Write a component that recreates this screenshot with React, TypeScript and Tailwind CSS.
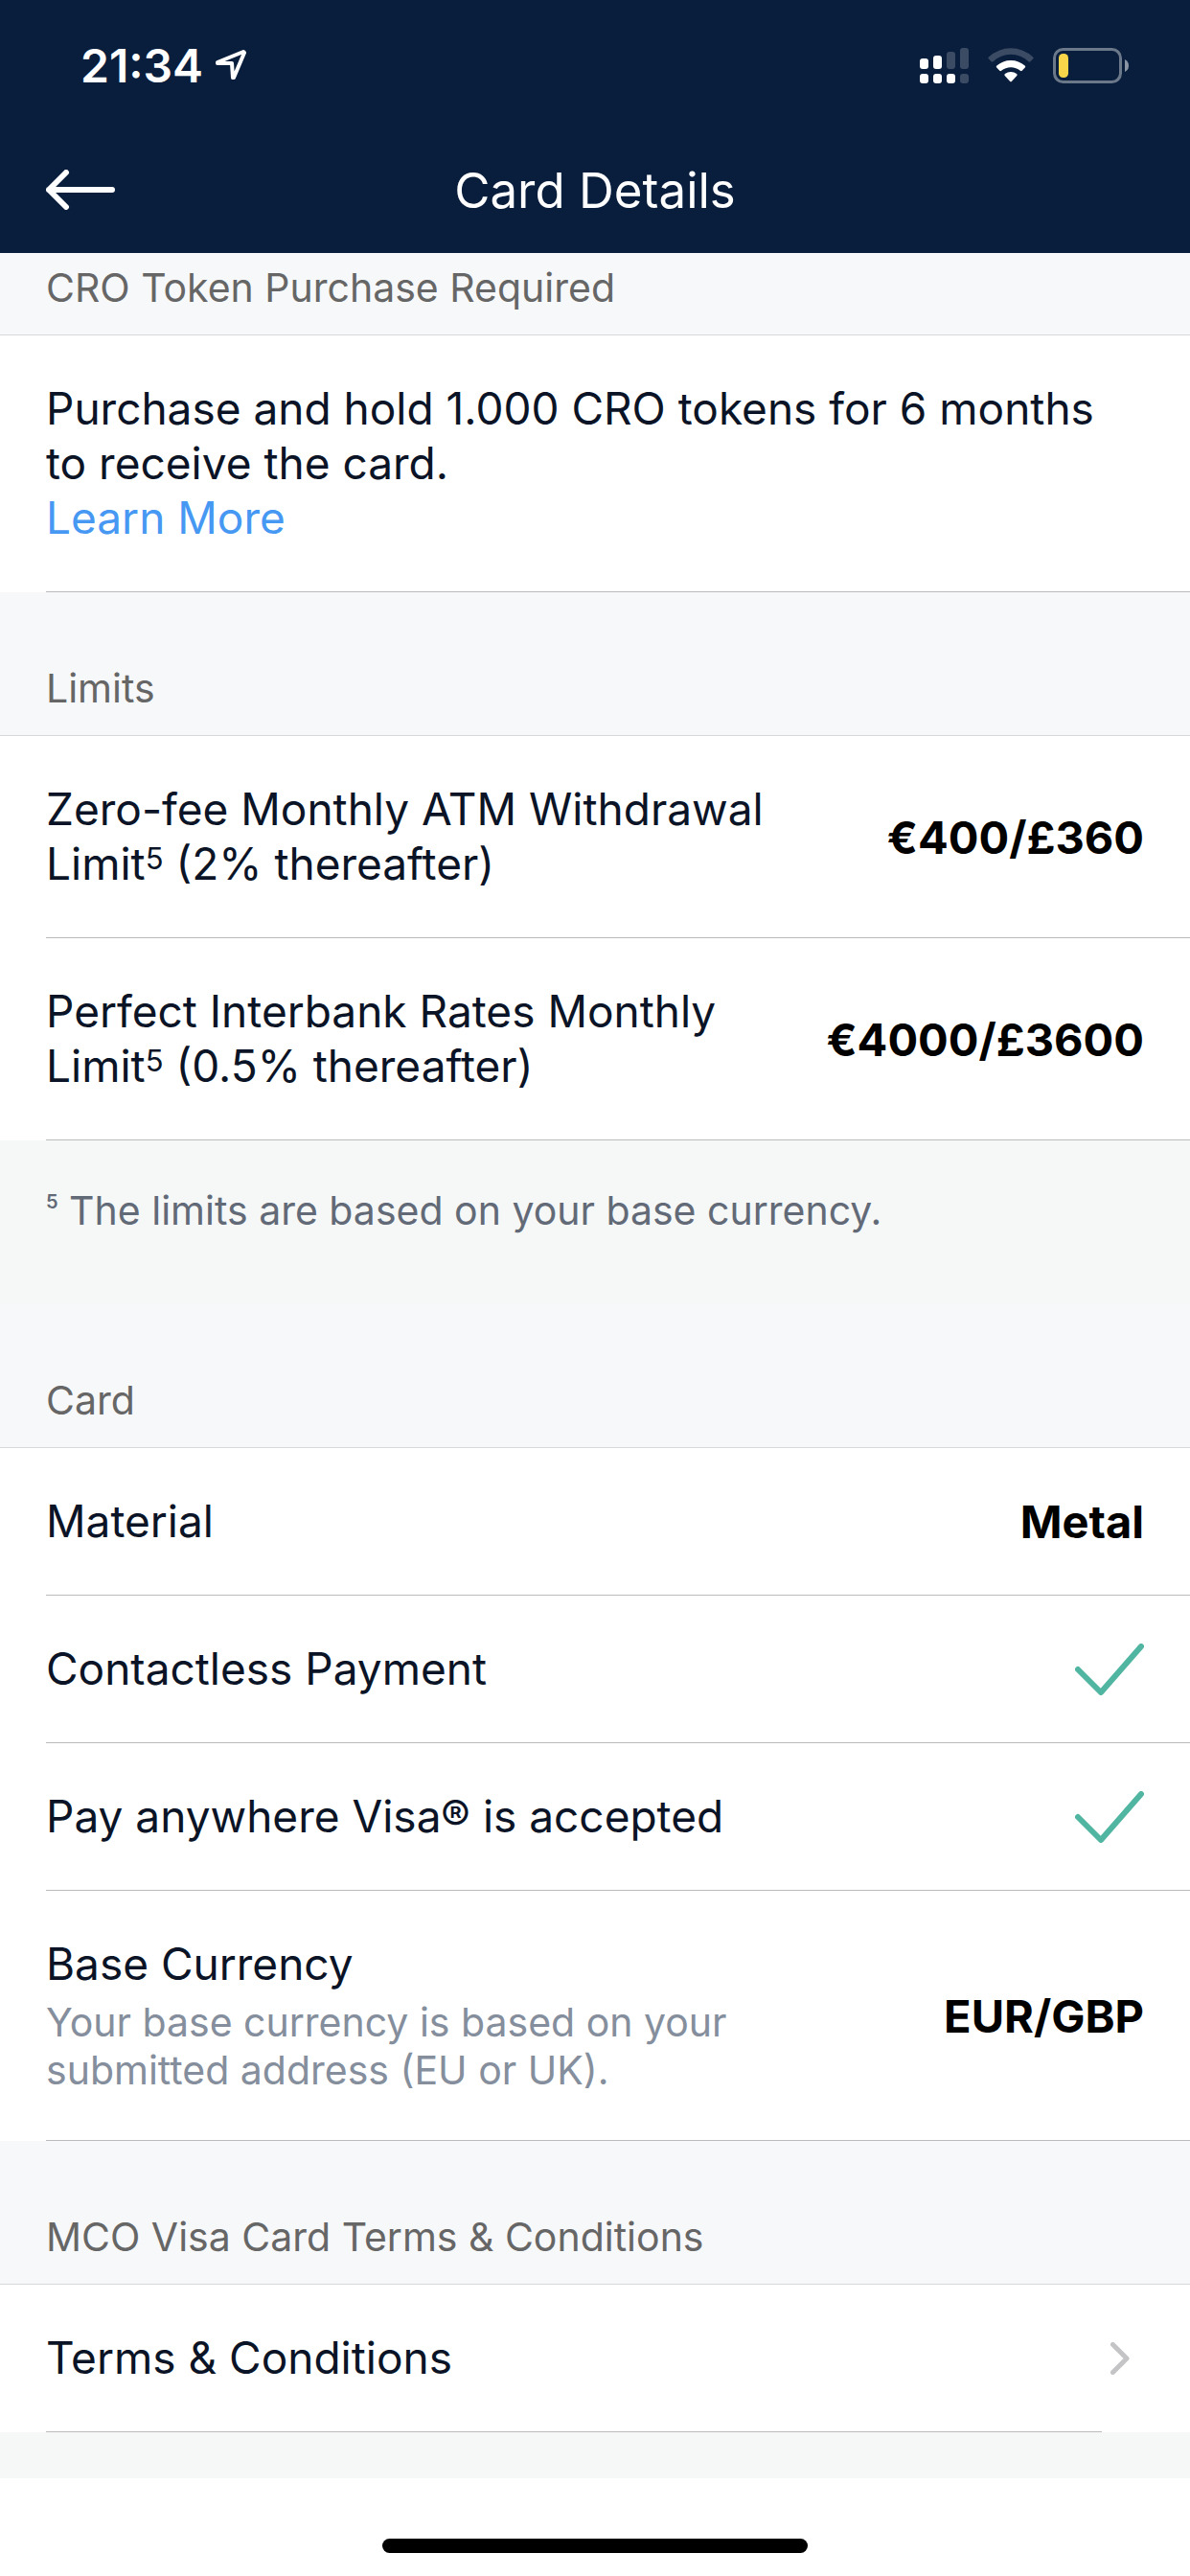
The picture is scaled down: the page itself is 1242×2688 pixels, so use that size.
import type { ReactNode } from "react";

function LocationArrow() {
  return (
    <svg viewBox="0 0 34 34" className="h-[34px] w-[34px]" fill="none" stroke="currentColor" strokeWidth="4" strokeLinejoin="round" aria-hidden="true">
      <path d="M30 3 L3 14 V15 L18 15 L19 30 L20 30 L31 4 Z" />
    </svg>
  );
}

function DualSignal() {
  return (
    <svg viewBox="0 0 51 37" className="h-[37px] w-[51px]" fill="currentColor" aria-label="Signal strength" role="img">
      <rect x="0" y="11" width="9" height="11" rx="3" />
      <rect x="14" y="8" width="9" height="14" rx="3" />
      <rect x="28" y="4" width="9" height="18" rx="3" opacity="0.2" />
      <rect x="42" y="0" width="9" height="22" rx="3" opacity="0.2" />
      <rect x="0" y="27" width="9" height="10" rx="3" />
      <rect x="14" y="27" width="9" height="10" rx="3" />
      <rect x="28" y="27" width="9" height="10" rx="3" />
      <rect x="42" y="27" width="9" height="10" rx="3" opacity="0.2" />
    </svg>
  );
}

function Wifi() {
  return (
    <svg viewBox="0 0 48 37" className="h-[37px] w-12" fill="currentColor" aria-label="Wi-Fi" role="img">
      <path opacity="0.2" d="M0.9 11.6 Q-0.2 10.5 0.9 9.4 A34 34 0 0 1 47.1 9.4 Q48.2 10.5 47.1 11.6 L44.4 14.3 Q43.5 15.1 42.5 14.2 A27 27 0 0 0 5.5 14.2 Q4.5 15.1 3.6 14.3 Z" />
      <path d="M9.2 20.6 Q8.2 19.6 9.3 18.6 A22 22 0 0 1 38.7 18.6 Q39.8 19.6 38.8 20.6 L35.7 23.8 Q34.8 24.6 33.9 23.8 A15.5 15.5 0 0 0 14.1 23.8 Q13.2 24.6 12.3 23.8 Z" />
      <path d="M17.7 28.9 Q16.8 27.9 17.9 27 A10 10 0 0 1 30.1 27 Q31.2 27.9 30.3 28.9 L24.8 34.9 Q24 35.7 23.2 34.9 Z" />
    </svg>
  );
}

function Battery() {
  return (
    <svg viewBox="0 0 80 37" className="h-[37px] w-20" fill="none" aria-label="Battery low" role="img">
      <rect x="1.5" y="1.5" width="69" height="34" rx="9" stroke="#6b788a" strokeWidth="3" />
      <rect x="6" y="6" width="10" height="25" rx="4.5" fill="#f9d649" />
      <path d="M75 12 Q79 14 79 18.5 Q79 23 75 25 Z" fill="#8b95a4" />
    </svg>
  );
}

function BackArrow() {
  return (
    <svg viewBox="0 0 72 42" className="h-[42px] w-[72px]" fill="none" stroke="currentColor" strokeWidth="6" strokeLinecap="round" strokeLinejoin="round" aria-hidden="true">
      <path d="M21 3 L3 21 L21 39 M3 21 H69" />
    </svg>
  );
}

function Check() {
  return (
    <svg viewBox="0 0 72 54" className="h-[54px] w-[72px]" fill="none" stroke="#50b5a1" strokeWidth="6" strokeLinecap="round" strokeLinejoin="round" aria-label="Included" role="img">
      <path d="M3 27 L27 51 L69 3" />
    </svg>
  );
}

function Chevron() {
  return (
    <svg viewBox="0 0 20 34" className="mr-[15px] ml-[9px] h-[34px] w-5 shrink-0" fill="none" stroke="#c4c4c6" strokeWidth="5" strokeLinecap="round" strokeLinejoin="round" aria-hidden="true">
      <path d="M2.5 2.5 L17 17 L2.5 31.5" />
    </svg>
  );
}

function SectionTitle({ children, first = false }: { children: ReactNode; first?: boolean }) {
  return (
    <h2
      className={
        "border-b border-[#d6d9dc] bg-[#f7f8fa] px-12 pb-6 text-[41px] leading-[50px] text-[#666666] " +
        (first ? "pt-[11px]" : "pt-[75px]")
      }
    >
      {children}
    </h2>
  );
}

function Row({ label, note, value }: { label: ReactNode; note?: string; value: ReactNode }) {
  return (
    <div className="ml-12 flex items-center justify-between gap-8 border-b border-[#bbbbbd] py-12 pr-12">
      <dt className="max-w-[770px]">
        {label}
        {note && <p className="mt-[7px] text-[41px] leading-[50px] text-[#858e9c]">{note}</p>}
      </dt>
      <dd className="shrink-0 text-[47px] font-bold text-black">{value}</dd>
    </div>
  );
}

function Five() {
  return <span className="align-top text-[31px] leading-[46px]">5</span>;
}

export default function App() {
  return (
    <div className="flex min-h-screen flex-col bg-white font-['Inter',sans-serif] text-[46px] leading-[57px] text-[#0b1426]">
      <header className="bg-[#091e3d] text-white">
        <div className="flex h-33 items-center justify-between pt-1 pr-[63px] pl-[84px]">
          <div className="flex items-center gap-3">
            <time className="text-[48px] font-semibold">21:34</time>
            <LocationArrow />
          </div>
          <div className="flex items-center gap-5">
            <DualSignal />
            <Wifi />
            <Battery />
          </div>
        </div>
        <div className="grid h-33 grid-cols-[1fr_auto_1fr] items-center px-12">
          <button type="button" aria-label="Back" className="justify-self-start">
            <BackArrow />
          </button>
          <h1 className="text-[51px]">Card Details</h1>
        </div>
      </header>

      <main>
        <SectionTitle first>CRO Token Purchase Required</SectionTitle>
        <div className="ml-12 border-b border-[#bbbbbd] py-12 pr-12">
          <p>Purchase and hold 1.000 CRO tokens for 6 months to receive the card.</p>
          <a href="#learn-more" className="block text-[#4698f3]">Learn More</a>
        </div>

        <SectionTitle>Limits</SectionTitle>
        <dl>
          <Row label={<>Zero-fee Monthly ATM Withdrawal Limit<Five /> (2% thereafter)</>} value="€400/£360" />
          <Row label={<>Perfect Interbank Rates Monthly Limit<Five /> (0.5% thereafter)</>} value="€4000/£3600" />
        </dl>
        <p className="bg-[#f6f8f8] px-12 pt-12 pb-[73px] text-[41px] leading-[50px] text-[#636a77]">
          <span className="align-top text-[20px] leading-[33px] font-semibold">5</span> The limits are based on your base currency.
        </p>

        <SectionTitle>Card</SectionTitle>
        <dl>
          <Row label="Material" value="Metal" />
          <Row label="Contactless Payment" value={<Check />} />
          <Row label="Pay anywhere Visa® is accepted" value={<Check />} />
          <Row
            label="Base Currency"
            note="Your base currency is based on your submitted address (EU or UK)."
            value="EUR/GBP"
          />
        </dl>

        <SectionTitle>MCO Visa Card Terms &amp; Conditions</SectionTitle>
        <a href="#terms" className="flex items-center pr-12">
          <span className="ml-12 flex-1 border-b border-[#bbbbbd] py-12">Terms &amp; Conditions</span>
          <Chevron />
        </a>
        <div className="h-12 bg-[#f6f8f8]" />
      </main>

      <footer className="mt-auto flex justify-center pb-6">
        <div className="h-[15px] w-[444px] rounded-full bg-black" />
      </footer>
    </div>
  );
}
